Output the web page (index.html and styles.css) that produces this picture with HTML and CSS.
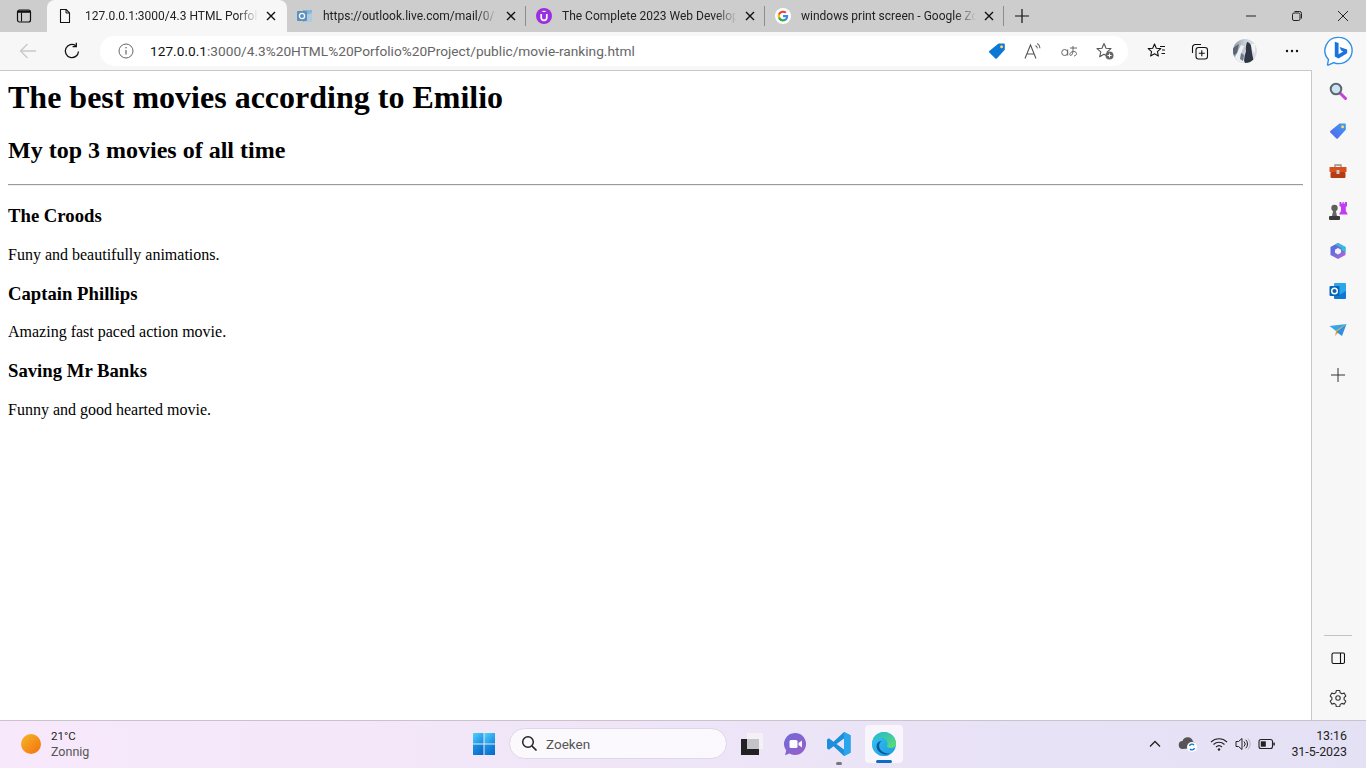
FILE: index.html
```html
<!DOCTYPE html>
<html lang="en">
<head>
<meta charset="utf-8">
<title>Movie ranking</title>
<link rel="stylesheet" href="styles.css">
</head>
<body>
<div class="screen">
  <div class="tabstrip">
    <div class="slot tab-actions">
      <svg width="16" height="16" viewBox="0 0 16 16"><rect x="1.500" y="2" width="13" height="12" rx="2" fill="none" stroke="#111" stroke-width="1.200"/><path d="M2 2.500h12v2.300H2z" fill="#111"/><path d="M5.500 4.500v9" stroke="#111" stroke-width="1.100"/></svg>
    </div>
    <div class="tab tab-active">
      <svg class="fav" width="16" height="16" viewBox="0 0 16 16"><path d="M3.500 1.500h5.600l3.400 3.400v9.600h-9z" fill="none" stroke="#111" stroke-width="1.100" stroke-linejoin="round"/><path d="M9 1.600v3.400h3.400" fill="none" stroke="#111" stroke-width="1"/></svg>
      <span class="tab-title">127.0.0.1:3000/4.3 HTML Porfolio Project</span>
      <svg class="close" width="10" height="10" viewBox="0 0 10 10"><path d="M1 1l8 8M9 1l-8 8" stroke="#111" stroke-width="1.400"/></svg>
    </div>
    <div class="tab">
      <svg class="fav dim" width="16" height="16" viewBox="0 0 16 16"><path d="M6 2h9v12H6z" fill="#7fb0d8"/><path d="M9 7l6-2v9H7z" fill="#a9cbe6"/><rect x="0" y="3" width="10" height="10" rx="1" fill="#4b86bd"/><circle cx="5" cy="8" r="2.600" fill="none" stroke="#fff" stroke-width="1.300"/></svg>
      <span class="tab-title">https://outlook.live.com/mail/0/</span>
      <svg class="close" width="10" height="10" viewBox="0 0 10 10"><path d="M1 1l8 8M9 1l-8 8" stroke="#111" stroke-width="1.400"/></svg>
    </div>
    <div class="tab">
      <svg class="fav" width="16" height="16" viewBox="0 0 16 16"><circle cx="8" cy="8" r="8" fill="#9a2ee0"/><path d="M5.200 6v3.600a2.800 2.800 0 0 0 5.600 0V6" fill="none" stroke="#fff" stroke-width="1.700"/><path d="M8 2.600l2.600 1.500H5.400z" fill="#fff"/></svg>
      <span class="tab-title">The Complete 2023 Web Development Bootcamp</span>
      <svg class="close" width="10" height="10" viewBox="0 0 10 10"><path d="M1 1l8 8M9 1l-8 8" stroke="#111" stroke-width="1.400"/></svg>
    </div>
    <div class="tab">
      <svg class="fav" width="16" height="16" viewBox="0 0 16 16"><circle cx="8" cy="8" r="8" fill="#fff"/><path d="M13.200 8.100c0-.4 0-.8-.1-1.200H8v2.300h2.900c-.1.700-.5 1.300-1.100 1.700v1.400h1.800c1-1 1.600-2.400 1.600-4.200z" fill="#4285f4"/><path d="M8 13.400c1.500 0 2.700-.5 3.600-1.300l-1.800-1.400c-.5.300-1.100.5-1.800.5-1.400 0-2.600-1-3-2.200H3.200v1.400C4.100 12.200 5.900 13.400 8 13.400z" fill="#34a853"/><path d="M5 9c-.2-.7-.2-1.400 0-2V5.500H3.200a5.400 5.400 0 0 0 0 4.900z" fill="#fbbc05"/><path d="M8 4.800c.8 0 1.500.3 2.100.8l1.500-1.500A5.400 5.400 0 0 0 3.200 5.600L5 7c.4-1.300 1.600-2.200 3-2.200z" fill="#ea4335"/></svg>
      <span class="tab-title">windows print screen - Google Zoeken</span>
      <svg class="close" width="10" height="10" viewBox="0 0 10 10"><path d="M1 1l8 8M9 1l-8 8" stroke="#111" stroke-width="1.400"/></svg>
    </div>
    <div class="slot new-tab">
      <svg width="16" height="16" viewBox="0 0 16 16"><path d="M8 1v14M1 8h14" stroke="#111" stroke-width="1.200"/></svg>
    </div>
    <div class="window-controls">
      <div class="win-btn"><svg width="12" height="12" viewBox="0 0 12 12"><path d="M1 6h10" stroke="#222" stroke-width="1"/></svg></div>
      <div class="win-btn"><svg width="12" height="12" viewBox="0 0 12 12"><rect x="1.500" y="3" width="7.500" height="7.500" rx="1.500" fill="none" stroke="#222"/><path d="M3.500 1.500h5a2 2 0 0 1 2 2v5" fill="none" stroke="#222"/></svg></div>
      <div class="win-btn"><svg width="12" height="12" viewBox="0 0 12 12"><path d="M1 1l10 10M11 1L1 11" stroke="#222" stroke-width="1"/></svg></div>
    </div>
  </div>

  <div class="toolbar">
    <div class="slot-tool back">
      <svg width="18" height="18" viewBox="0 0 18 18"><path d="M17 9H1.500M8.500 2L1.500 9l7 7" fill="none" stroke="#c9c9c9" stroke-width="1.300"/></svg>
    </div>
    <div class="slot-tool refresh">
      <svg width="18" height="18" viewBox="0 0 18 18"><path d="M15.500 9.500A6.600 6.600 0 1 1 12.800 3.700" fill="none" stroke="#111" stroke-width="1.300"/><path d="M13.300 0.800v3.800H9.600" fill="none" stroke="#111" stroke-width="1.300"/></svg>
    </div>
    <div class="address">
      <svg class="info" width="16" height="16" viewBox="0 0 16 16"><circle cx="8" cy="8" r="7" fill="none" stroke="#666" stroke-width="1"/><path d="M8 7v4.500" stroke="#666" stroke-width="1.200"/><circle cx="8" cy="4.800" r=".8" fill="#666"/></svg>
      <span class="url"><span class="url-host">127.0.0.1</span>:3000/4.3%20HTML%20Porfolio%20Project/public/movie-ranking.html</span>
      <div class="addr-icons">
        <div class="addr-icon"><svg width="18" height="18" viewBox="0 0 18 18"><path d="M10.500 1.500h5.500a.8.800 0 0 1 .8.800v5.500L8.800 16.500a1 1 0 0 1-1.400 0L1.300 10.400a1 1 0 0 1 0-1.400z" fill="#0a78d4"/><circle cx="13.600" cy="4.700" r="1.500" fill="#ffd75e"/></svg></div>
        <div class="addr-icon"><svg width="18" height="18" viewBox="0 0 18 18"><path d="M1 16.500L6.500 3 12 16.500M2.800 12h7.400" fill="none" stroke="#555" stroke-width="1.100"/><path d="M11.500 3.500c1.100.6 1.800 1.600 1.900 2.900M13.300 1.500c1.600 1 2.600 2.700 2.700 4.700" fill="none" stroke="#666" stroke-width="1.100"/></svg></div>
        <div class="addr-icon"><svg width="18" height="18" viewBox="0 0 18 18"><circle cx="4.700" cy="10.500" r="3" fill="none" stroke="#666"/><path d="M7.700 7.500V13.500" stroke="#666"/><path d="M10 6h7M13 4v4c0 3-1 5.500-2.300 5.500-1.500 0-1-3 1.500-3.800 2-.6 4.300.1 4.300 1.800 0 1.500-1.200 2.300-2.500 2.500" fill="none" stroke="#666" stroke-width="1"/></svg></div>
        <div class="addr-icon"><svg width="20" height="20" viewBox="0 0 20 20"><path d="M9 2.500l2 4.700 5 .4-3.800 3.300 1.100 4.900L9 13.300l-4.300 2.500 1.100-4.900L2 7.600l5-.4z" fill="none" stroke="#555" stroke-width="1.100" stroke-linejoin="round"/><circle cx="14.500" cy="14.500" r="4" fill="#666"/><path d="M14.500 12.500v4M12.500 14.500h4" stroke="#fff" stroke-width="1"/></svg></div>
      </div>
    </div>
    <div class="tool-icons">
      <div class="tool-icon fav-hub"><svg width="20" height="20" viewBox="0 0 20 20"><path d="M7.500 3l1.800 4.200 4.500.4-3.400 3 1 4.400-3.900-2.300-3.900 2.300 1-4.400-3.400-3 4.500-.4z" fill="none" stroke="#111" stroke-width="1.100" stroke-linejoin="round"/><path d="M13 5.500h5M15 9h3M14.500 12.500h3.500" stroke="#111" stroke-width="1.100"/></svg></div>
      <div class="tool-icon coll"><svg width="20" height="20" viewBox="0 0 20 20"><path d="M2.500 12V6.500a3 3 0 0 1 3-3h5.500" fill="none" stroke="#111" stroke-width="1.100"/><rect x="6" y="6.500" width="11.500" height="11.500" rx="2.500" fill="none" stroke="#111" stroke-width="1.100"/><path d="M11.800 9.200v6M8.800 12.200h6" stroke="#111" stroke-width="1.100"/></svg></div>
      <div class="tool-icon prof"><svg width="24" height="24" viewBox="0 0 24 24"><defs><linearGradient id="pg" x1="0" y1="0" x2="1" y2="0"><stop offset="0" stop-color="#8c97a6"/><stop offset=".5" stop-color="#c9d0d8"/><stop offset="1" stop-color="#dfe2e6"/></linearGradient><clipPath id="pc"><circle cx="12" cy="12" r="12"/></clipPath></defs><circle cx="12" cy="12" r="12" fill="url(#pg)"/><g clip-path="url(#pc)"><path d="M14 3c3 .5 4.500 3.500 4.500 6.500 0 4 1.500 8.500 2.500 14.500H11c0-5 1-8.500 2-11.500-.5-3 0-6.500 1-9.500z" fill="#2e3644"/><path d="M2 18l6-12 3 1-3 8 4 9H3z" fill="#eef1f4"/><path d="M0 9l6-4-2 9-4 3z" fill="#5a6675"/><path d="M8 14l3 2-1 6-3-2z" fill="#6f7b8a"/><path d="M18 5h4v9l-3-3z" fill="#f2f4f7"/></g></svg></div>
      <div class="tool-icon more"><svg width="16" height="16" viewBox="0 0 16 16"><circle cx="3" cy="8" r="1.200" fill="#111"/><circle cx="8" cy="8" r="1.200" fill="#111"/><circle cx="13" cy="8" r="1.200" fill="#111"/></svg></div>
    </div>
    <div class="bing-slot">
      <svg width="30" height="30" viewBox="0 0 32 32"><path d="M16 1.500a14 14 0 0 1 0 28c-2 0-4-.4-5.600-1.200L4.500 31c-.6.200-.8-.2-.7-.7l1-5.300A14 14 0 0 1 16 1.500z" fill="#fff" stroke="#2f90e8" stroke-width="1.500"/><path d="M11.500 6l4 1.500v12l5-3-2.300-1.100-1.500-3.700 8 2.800v3.900l-9.200 5.600-4-2.200z" fill="#1a73e0"/></svg>
    </div>
  </div>

  <div class="main">
    <div class="page">
      <h1 class="page-title">The best movies according to Emilio</h1>
      <h2 class="page-sub">My top 3 movies of all time</h2>
      <hr class="rule">
      <h3 class="movie">The Croods</h3>
      <p class="desc">Funy and beautifully animations.</p>
      <h3 class="movie">Captain Phillips</h3>
      <p class="desc">Amazing fast paced action movie.</p>
      <h3 class="movie">Saving Mr Banks</h3>
      <p class="desc">Funny and good hearted movie.</p>
    </div>
    <div class="sidebar">
      <div class="side-item"><svg width="18" height="18" viewBox="0 0 18 18"><path d="M10.500 10.500l6 6" stroke="#c93fdc" stroke-width="3" stroke-linecap="round"/><circle cx="7" cy="7" r="5.300" fill="#c9e3f5" stroke="#5d6670" stroke-width="2"/></svg></div>
      <div class="side-item"><svg width="18" height="18" viewBox="0 0 18 18"><defs><linearGradient id="tg" x1="0" y1="1" x2="1" y2="0"><stop offset="0" stop-color="#5a5ff0"/><stop offset="1" stop-color="#3aa0f0"/></linearGradient></defs><path d="M10.500 1.500h5.500a.8.800 0 0 1 .8.800v5.500L8.800 16.500a1 1 0 0 1-1.400 0L1.300 10.400a1 1 0 0 1 0-1.400z" fill="url(#tg)"/><circle cx="13.600" cy="4.700" r="1.500" fill="#ffd75e"/></svg></div>
      <div class="side-item"><svg width="18" height="18" viewBox="0 0 18 18"><path d="M6 5V3h6v2" fill="none" stroke="#9a8a80" stroke-width="1.300"/><rect x="0.500" y="5" width="17" height="5" fill="#d94f1e"/><rect x="1.500" y="10" width="15" height="6" rx="1" fill="#b53c12"/><rect x="7.500" y="8" width="3" height="4" rx=".5" fill="#c9c9c9"/></svg></div>
      <div class="side-item"><svg width="20" height="20" viewBox="0 0 20 20"><path d="M11.500 1h1.800v1.500h1.200V1h1.200v1.500h1.200V1H19v4l-1.200 1v4l1.600 2.500v1h-8v-1l1.600-2.500V6L11.500 5z" fill="#c23cf5"/><circle cx="6.500" cy="7" r="3.200" fill="#5f5f5f"/><path d="M5.200 9.500h2.600l1.200 5.500H4z" fill="#666"/><rect x="1" y="15" width="11" height="4" rx="1" fill="#3a3a3a"/></svg></div>
      <div class="side-item"><svg width="18" height="18" viewBox="0 0 18 18"><defs><linearGradient id="m1" x1="0" y1="0" x2="1" y2="1"><stop offset="0" stop-color="#3f6fe0"/><stop offset="1" stop-color="#b06ad8"/></linearGradient><linearGradient id="m2" x1="0" y1="0" x2="1" y2="0"><stop offset="0" stop-color="#4aa8e8"/><stop offset="1" stop-color="#26c7d9"/></linearGradient></defs><path d="M9 1l7.500 4v8L9 17l-7.500-4V5z" fill="url(#m1)"/><path d="M6 2.500L9 1l7.500 4v5l-4-2V6z" fill="url(#m2)"/><path d="M9 6l3 1.700v3L9 12.400l-3-1.700v-3z" fill="#f2f2f6"/></svg></div>
      <div class="side-item"><svg width="18" height="18" viewBox="0 0 18 18"><rect x="5" y="1" width="12" height="15" rx="1" fill="#28a8ea"/><path d="M5 9l6 3.500L17 9v7a1 1 0 0 1-1 1H6a1 1 0 0 1-1-1z" fill="#0f78d4"/><rect x="0.500" y="4" width="10" height="10" rx="1" fill="#0a64b4"/><circle cx="5.500" cy="9" r="2.800" fill="none" stroke="#fff" stroke-width="1.400"/></svg></div>
      <div class="side-item"><svg width="18" height="18" viewBox="0 0 18 18"><path d="M0.500 4L17.500 2 7 9z" fill="#38a5e8"/><path d="M17.500 2L7 9l-1 5z" fill="#f2a71e"/><path d="M17.500 2L13 14 7.500 10z" fill="#2f8fe0"/></svg></div>
      <div class="side-item side-add"><svg width="14" height="14" viewBox="0 0 14 14"><path d="M7 0v14M0 7h14" stroke="#333" stroke-width="1"/></svg></div>
      <div class="side-spacer"></div>
      <div class="side-divider"></div>
      <div class="side-item"><svg width="14" height="14" viewBox="0 0 14 14"><rect x="1" y="2" width="12.500" height="10.500" rx="1.500" fill="none" stroke="#111" stroke-width="1.100"/><path d="M9.500 2v10.500" stroke="#111" stroke-width="1.100"/></svg></div>
      <div class="side-item"><svg width="18" height="18" viewBox="0 0 18 18"><path d="M7.300 1.500h3.400l.5 2.300 1.700 1 2.300-.7 1.600 2.900-1.700 1.600v2l1.700 1.600-1.600 2.900-2.300-.7-1.700 1-.5 2.300H7.300l-.5-2.300-1.700-1-2.300.7-1.600-2.900 1.700-1.600v-2L1.200 7l1.600-2.900 2.300.7 1.700-1z" fill="none" stroke="#333" stroke-width="1.100" stroke-linejoin="round"/><circle cx="9" cy="9" r="2.200" fill="none" stroke="#333" stroke-width="1.100"/></svg></div>
    </div>
  </div>

  <div class="taskbar">
    <div class="weather">
      <div class="sun"></div>
      <div class="weather-text">
        <div class="temp">21°C</div>
        <div class="cond">Zonnig</div>
      </div>
    </div>
    <div class="task-center">
      <div class="winlogo">
        <svg width="24" height="24" viewBox="0 0 24 24"><defs><linearGradient id="w1" x1="0" y1="0" x2="1" y2="1"><stop offset="0" stop-color="#52d2ff"/><stop offset="1" stop-color="#1488de"/></linearGradient><linearGradient id="w2" x1="0" y1="0" x2="1" y2="1"><stop offset="0" stop-color="#1b98e6"/><stop offset="1" stop-color="#0666c8"/></linearGradient></defs><rect x="1" y="1" width="10.500" height="10.500" fill="url(#w1)"/><rect x="12.500" y="1" width="10.500" height="10.500" fill="url(#w1)"/><rect x="1" y="12.500" width="10.500" height="10.500" fill="url(#w2)"/><rect x="12.500" y="12.500" width="10.500" height="10.500" fill="url(#w2)"/></svg>
      </div>
      <div class="search">
        <svg width="17" height="17" viewBox="0 0 17 17"><circle cx="7" cy="7" r="5.300" fill="none" stroke="#222" stroke-width="1.500"/><path d="M11 11l4.500 4.500" stroke="#222" stroke-width="1.700"/></svg>
        <span class="search-text">Zoeken</span>
      </div>
      <div class="task-app taskview">
        <svg width="24" height="24" viewBox="0 0 24 24"><rect x="1" y="7" width="18" height="16" fill="#222"/><rect x="7" y="1" width="16" height="16" fill="#f4f2f7" opacity=".95"/><rect x="7" y="7" width="12" height="10" fill="#c4c4c8"/></svg>
      </div>
      <div class="task-app teams">
        <svg width="24" height="24" viewBox="0 0 24 24"><defs><linearGradient id="tm" x1="0" y1="0" x2="1" y2="1"><stop offset="0" stop-color="#6f6ad8"/><stop offset="1" stop-color="#9a5fc8"/></linearGradient></defs><path d="M12 1a11 11 0 1 1-5.500 20.500L2 23.300l1.200-4.800A11 11 0 0 1 12 1z" fill="url(#tm)"/><rect x="6.500" y="8" width="8" height="8" rx="1.500" fill="#fff"/><path d="M15.500 11l3.500-2.500v7L15.500 13z" fill="#fff"/></svg>
      </div>
      <div class="task-app vscode">
        <svg width="26" height="26" viewBox="0 0 26 26"><path d="M18 1l6.500 3.200v17.600L18 25 7.500 15.200 3 18.700 1 17.500V8.500L3 7.300l4.500 3.500z" fill="#1c8fdc"/><path d="M18 1l6.500 3.200v17.600L18 25z" fill="#29a5ee"/><path d="M18 7.500L10.500 13 18 18.500z" fill="#e9e3f6"/></svg>
        <span class="run-dot"></span>
      </div>
      <div class="task-app edge">
        <svg width="26" height="26" viewBox="0 0 26 26"><defs><linearGradient id="e1" x1="0" y1="0" x2="1" y2="1"><stop offset="0" stop-color="#0c59a4"/><stop offset="1" stop-color="#114a8b"/></linearGradient><linearGradient id="e2" x1="0" y1="0" x2="1" y2="1"><stop offset="0" stop-color="#35c1f1"/><stop offset="1" stop-color="#1b9de2"/></linearGradient><linearGradient id="e3" x1="0" y1="0" x2="1" y2="1"><stop offset="0" stop-color="#1fb6d8"/><stop offset="1" stop-color="#5fe06a"/></linearGradient></defs><circle cx="13" cy="13" r="12" fill="url(#e2)"/><path d="M1 13A12 12 0 0 1 25 13c0 2.500-2.500 4-5.500 4-2 0-3.500-.7-3.500-2 0-.7.500-1 .5-2.300C16.500 9.500 14 7 10.500 7 5 7 1 10 1 13z" fill="url(#e3)"/><path d="M1 13c0-3 4-6 9.500-6 1 0 1.500.2 2 .4-3 .6-5 3-5 6.100 0 5 4 9.500 10 10.500-1.300.6-3 1-4.500 1A12 12 0 0 1 1 13z" fill="url(#e2)"/><path d="M19 22.500c-3 1.500-8 1.400-11.500-2.500-2.500-2.800-2.500-6.500-.5-8.500 1-1 2.300-1.500 3.500-1.500-2 1.500-3 4-2 7 1 3 5 6 10.500 5.500z" fill="url(#e1)"/></svg>
        <span class="run-bar"></span>
      </div>
    </div>
    <div class="tray">
      <div class="tray-icon chev"><svg width="12" height="12" viewBox="0 0 12 12"><path d="M1 8.500L6 3.500l5 5" fill="none" stroke="#222" stroke-width="1.300"/></svg></div>
      <div class="tray-icon cloud"><svg width="20" height="18" viewBox="0 0 20 18"><path d="M5 14a4 4 0 0 1-.5-8A5.500 5.500 0 0 1 15 6.500 3.500 3.500 0 0 1 15 13z" fill="#555"/><circle cx="14" cy="12" r="5" fill="#fff"/><path d="M11.500 11a2.600 2.600 0 0 1 4.500-1M16.500 13a2.600 2.600 0 0 1-4.500 1" fill="none" stroke="#0a78d4" stroke-width="1.300"/></svg></div>
      <div class="tray-icon wifi"><svg width="18" height="16" viewBox="0 0 18 16"><path d="M1 6a11.500 11.500 0 0 1 16 0M3.500 8.500a8 8 0 0 1 11 0M6 11a4.500 4.500 0 0 1 6 0" fill="none" stroke="#222" stroke-width="1.100"/><circle cx="9" cy="13.500" r="1.200" fill="#222"/></svg></div>
      <div class="tray-icon vol"><svg width="16" height="16" viewBox="0 0 16 16"><path d="M1 5.500h2.500L7 2.500v11l-3.500-3H1z" fill="none" stroke="#222" stroke-width="1"/><path d="M9 5.500a3.500 3.500 0 0 1 0 5M10.800 3.800a6 6 0 0 1 0 8.400" fill="none" stroke="#222" stroke-width="1"/><path d="M13 2.500a8 8 0 0 1 0 11" fill="none" stroke="#b5b0bd" stroke-width="1"/></svg></div>
      <div class="tray-icon batt"><svg width="18" height="12" viewBox="0 0 18 12"><rect x="1" y="1.500" width="13.500" height="9" rx="2" fill="none" stroke="#222" stroke-width="1.100"/><rect x="2.800" y="3.300" width="5" height="5.400" fill="#222"/><rect x="15.300" y="4.500" width="1.500" height="3" fill="#222"/></svg></div>
      <div class="clock">
        <div>13:16</div>
        <div>31-5-2023</div>
      </div>
    </div>
  </div>
</div>
</body>
</html>
```

FILE: styles.css
```css
* { box-sizing: border-box; }
html, body { margin: 0; height: 100%; }
body { overflow: hidden; background: #fff; font-family: Roboto, "Noto Sans", sans-serif; }
svg { display: block; }

.screen { width: 1366px; height: 768px; display: flex; flex-direction: column; overflow: hidden; }

/* tab strip */
.tabstrip { height: 32px; flex: none; display: flex; background: #cdcdcd; }
.slot { display: flex; align-items: center; justify-content: center; }
.tab-actions { width: 47px; }
.tab { width: 239px; height: 32px; flex: none; display: flex; align-items: center; padding: 0 10px 0 10px; position: relative; font-size: 12px; color: #222; }
.tab::after { content: ""; position: absolute; right: 0; top: 6px; height: 20px; width: 1px; background: #8d8d8d; }
.tab-active { width: 240px; background: #f7f7f7; border-radius: 8px 8px 0 0; padding: 0 11px 0 30px; }
.tab-active::after { display: none; }
.tab-active .fav { position: absolute; left: 10px; top: 8px; margin: 0; }
.fav { flex: none; margin: 0 10px 0 0; }
.dim { opacity: .85; }
.tab-title { flex: 1; min-width: 0; white-space: nowrap; overflow: hidden; -webkit-mask-image: linear-gradient(to right, #000 88%, transparent 100%); mask-image: linear-gradient(to right, #000 88%, transparent 100%); }
.tab-active .tab-title { margin-left: 8px; }
.close { flex: none; margin-left: 8px; }
.new-tab { width: 36px; }
.window-controls { margin-left: auto; display: flex; }
.win-btn { width: 46px; height: 32px; display: flex; align-items: center; justify-content: center; }

/* toolbar */
.toolbar { height: 38px; flex: none; display: flex; align-items: center; background: #f7f7f7; }
.slot-tool { display: flex; align-items: center; justify-content: center; }
.back { width: 56px; }
.refresh { width: 32px; }
.address { width: 1028px; height: 30px; margin-left: 12px; flex: none; background: #fff; border-radius: 15px; display: flex; align-items: center; padding-left: 18px; font-size: 13.7px; color: #666; }
.info { flex: none; }
.url { margin-left: 16px; white-space: nowrap; }
.url-host { color: #111; }
.addr-icons { margin-left: auto; display: flex; padding-right: 5px; }
.addr-icon { width: 36px; height: 30px; display: flex; align-items: center; justify-content: center; }
.tool-icons { display: flex; margin-left: 7px; }
.tool-icon { width: 44px; height: 30px; display: flex; align-items: center; justify-content: center; }
.fav-hub { width: 43px; }
.prof { padding-left: 2px; }
.more { width: 52px; }
.bing-slot { width: 42px; display: flex; justify-content: center; }

/* main */
.main { flex: 1; min-height: 0; display: flex; }
.page { flex: 1; min-width: 0; border-top: 1px solid #c8c8c8; border-right: 1px solid #c8c8c8; padding: 8px 8px 0 8px; background: #fff; font-family: "Liberation Serif", "Times New Roman", serif; color: #000; }
.page-title { font-size: 32px; font-weight: 700; margin: 0 0 21.44px; }
.page-sub { font-size: 24px; font-weight: 700; margin: 0 0 19.92px; }
.rule { margin: 0 0 8px; height: 2px; border: 0; border-top: 1px solid #9a9a9a; border-bottom: 1px solid #eeeeee; }
.movie { font-size: 18.72px; font-weight: 700; margin: 18.72px 0; }
.desc { font-size: 16px; margin: 16px 0; }

/* sidebar */
.sidebar { width: 54px; flex: none; display: flex; flex-direction: column; align-items: center; padding: 1px 2px 2px 0; background: #f7f7f7; }
.side-item { width: 40px; height: 40px; flex: none; display: flex; align-items: center; justify-content: center; }
.side-add { margin-top: 4px; }
.side-spacer { flex: 1; }
.side-divider { width: 28px; height: 1px; flex: none; background: #c4c4c4; margin-bottom: 2px; }

/* taskbar */
.taskbar { height: 48px; flex: none; display: flex; align-items: center; border-top: 1px solid #c9c4cc; padding-bottom: 2px; background: linear-gradient(90deg, #f7e9fb 0%, #f1e6f8 40%, #e8e2f6 75%, #e5e1f5 100%); }
.weather { width: 473px; flex: none; display: flex; align-items: center; padding-left: 21px; }
.sun { width: 20px; height: 20px; border-radius: 50%; background: linear-gradient(135deg, #f5b82a, #f36f0c); }
.weather-text { margin-left: 10px; line-height: 16px; }
.temp { color: #1d1d1d; font-size: 11.5px; }
.cond { color: #555; font-size: 12.5px; }
.task-center { display: flex; align-items: center; height: 100%; }
.winlogo { width: 24px; margin-left: -1px; }
.search { width: 218px; height: 31px; margin-left: 13px; background: rgba(255,255,255,.75); border: 1px solid #ddd8e6; border-radius: 16px; display: flex; align-items: center; padding-left: 11px; }
.search-text { margin-left: 8px; font-size: 13.5px; color: #555; }
.task-app { width: 38px; height: 38px; margin-left: 6px; display: flex; align-items: center; justify-content: center; position: relative; }
.taskview { margin-left: 6px; }
.teams { margin-left: 5px; }
.edge { background: rgba(255,255,255,.65); border-radius: 4px; margin-left: 7px; }
.run-dot { position: absolute; bottom: -2px; left: 16px; width: 6px; height: 3px; border-radius: 2px; background: #777; }
.run-bar { position: absolute; bottom: 0; left: 11px; width: 16px; height: 3px; border-radius: 2px; background: #0a6cc4; }
.tray { margin-left: auto; display: flex; align-items: center; height: 100%; padding-right: 19px; }
.tray-icon { display: flex; align-items: center; justify-content: center; }
.chev { width: 12px; }
.cloud { width: 20px; margin-left: 17px; }
.wifi { width: 18px; margin-left: 12px; }
.vol { width: 16px; margin-left: 7px; }
.batt { width: 18px; margin-left: 7px; }
.clock { margin-left: 15px; text-align: right; font-size: 12.4px; line-height: 16px; color: #222; }
```
